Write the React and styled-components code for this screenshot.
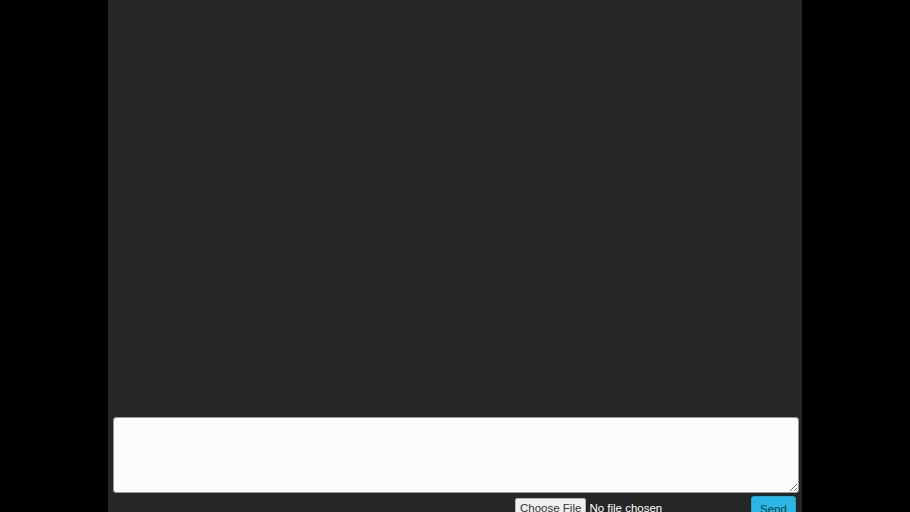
import React from 'react'
import styled, { createGlobalStyle } from 'styled-components'

const GlobalStyle = createGlobalStyle`
    html, body {
        margin: 0;
        padding: 0;
        background-color: #000;
        font-family: "Liberation Sans", Arial, sans-serif;
    }
`;

function App() {
    return (
        <>
            <GlobalStyle />
            <ChatContainer>
                <Messages />
                <MessageInput />
                <ActionRow>
                    <FileInput type="file" />
                    <SendButton>Send</SendButton>
                </ActionRow>
            </ChatContainer>
        </>
    )
}

export default App

const ChatContainer = styled.div`
    width: 694px;
    margin: 0 auto;
    min-height: 540px;
    background-color: #262626;
    display: flex;
    flex-direction: column;
`;

const Messages = styled.div`
    height: 417px;
    flex-shrink: 0;
`;

const MessageInput = styled.textarea`
    box-sizing: border-box;
    margin: 0 3px 0 5px;
    width: 686px;
    height: 76px;
    background-color: #fcfcfc;
    border: 1px solid #9a9a9a;
    border-radius: 3px;
    padding: 4px;
    font-family: "Liberation Sans", Arial, sans-serif;
    font-size: 12px;
    outline: none;
`;

const ActionRow = styled.div`
    display: flex;
    justify-content: flex-end;
    align-items: flex-start;
    gap: 4px;
    margin-top: 3px;
    padding-right: 6px;
`;

const FileInput = styled.input`
    width: 232px;
    margin: 2px 0 0 0;
    color: #fff;
    font-family: "Liberation Sans", Arial, sans-serif;
    font-size: 11.5px;

    &::file-selector-button {
        font-family: "Liberation Sans", Arial, sans-serif;
        font-size: 11.5px;
        color: #333;
        background-color: #efefef;
        border: 1px solid #b5b5b5;
        border-radius: 2px;
        padding: 3px 4px;
        margin-right: 3px;
    }
`;

const SendButton = styled.button`
    font-family: "Liberation Sans", Arial, sans-serif;
    font-size: 11.5px;
    color: #17384a;
    background-color: #29b8e6;
    border: 1px solid #22a6d2;
    border-radius: 3px;
    padding: 6px 8px;
    width: 45px;
    cursor: pointer;
`;
